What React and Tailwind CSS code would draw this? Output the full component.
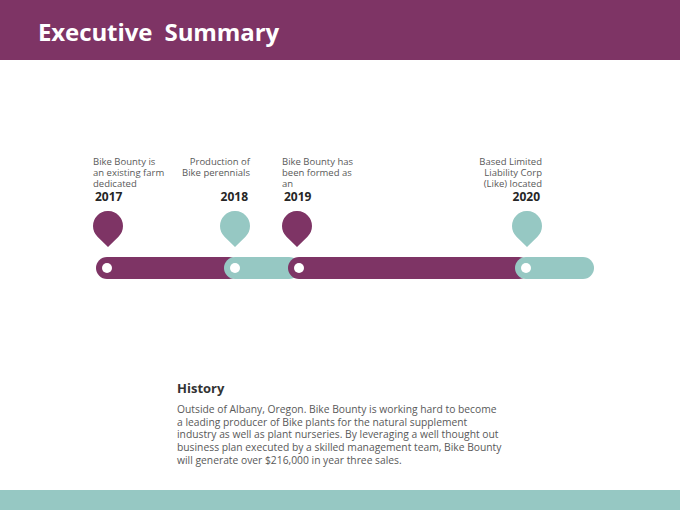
const PURPLE = 'bg-[#7e3465]';

const EVENTS = [
  { year: '2017', lines: ['Bike Bounty is', 'an existing farm', 'dedicated'], align: 'left', color: '#7e3465', gap: 'ml-0' },
  { year: '2018', lines: ['Production of', 'Bike perennials'], align: 'right', color: '#96c8c3', gap: 'ml-[97px]' },
  { year: '2019', lines: ['Bike Bounty has', 'been formed as', 'an'], align: 'left', color: '#7e3465', gap: 'ml-[32px]' },
  { year: '2020', lines: ['Based Limited', 'Liability Corp', '(Like) located'], align: 'right', color: '#96c8c3', gap: 'ml-[200px]' },
];

const SEGMENTS = [
  { cls: 'w-[144px] bg-[#7e3465]' },
  { cls: 'w-[76px] -ml-[16px] bg-[#96c8c3]' },
  { cls: 'w-[242px] -ml-[12px] bg-[#7e3465]' },
  { cls: 'w-[79px] -ml-[15px] bg-[#96c8c3]' },
];

function Pin({ color }) {
  return (
    <svg width="30" height="36" viewBox="0 0 30 36">
      <path d="M15 36 L4.5 25.7 A15 15 0 1 1 25.5 25.7 Z" fill={color} />
    </svg>
  );
}

export default function App() {
  return (
    <div
      className="w-[680px] h-[510px] flex flex-col bg-white overflow-hidden"
      style={{ fontFamily: '"Open Sans", "Noto Sans", sans-serif' }}
    >
      {/* Header */}
      <div className={`h-[60px] shrink-0 ${PURPLE} flex items-center pl-[38px] pt-[4px]`}>
        <h1 className="text-[24px] font-bold text-white tracking-[-0.1px]">
          Executive&nbsp; Summary
        </h1>
      </div>

      <div className="flex-1 flex flex-col">
        {/* Timeline labels + pins */}
        <div className="flex pl-[93px] pt-[96px]">
          {EVENTS.map((ev) => (
            <div
              key={ev.year}
              className={`w-[30px] flex flex-col ${ev.gap} ${ev.align === 'right' ? 'items-end text-right' : 'items-start text-left'}`}
            >
              <div className="h-[34px] whitespace-nowrap text-[9.5px] leading-[11px] text-[#595959]">
                {ev.lines.map((l) => (
                  <div key={l}>{l}</div>
                ))}
              </div>
              <div
                className={`whitespace-nowrap text-[12px] leading-[14px] font-bold text-[#262626] ${ev.align === 'right' ? 'pr-[2px]' : 'pl-[2px]'}`}
              >
                {ev.year}
              </div>
              <div className="mt-[7px] self-start">
                <Pin color={ev.color} />
              </div>
            </div>
          ))}
        </div>

        {/* Timeline bar */}
        <div className="flex pl-[96px] mt-[10px]">
          {SEGMENTS.map((s, i) => (
            <div key={i} className={`h-[22px] rounded-full flex items-center pl-[6px] ${s.cls}`}>
              <div className="w-[10px] h-[10px] rounded-full bg-white" />
            </div>
          ))}
        </div>

        {/* History */}
        <div className="pl-[177px] pt-[100px] w-[520px]">
          <h2 className="text-[13px] leading-[18px] font-bold text-[#333333]">History</h2>
          <p className="mt-[6px] text-[10.3px] leading-[12.7px] text-[#595959]">
            Outside of Albany, Oregon. Bike Bounty is working hard to become
            <br />
            a leading producer of Bike plants for the natural supplement
            <br />
            industry as well as plant nurseries. By leveraging a well thought out
            <br />
            business plan executed by a skilled management team, Bike Bounty
            <br />
            will generate over $216,000 in year three sales.
          </p>
        </div>
      </div>

      {/* Footer band */}
      <div className="h-[20px] shrink-0 bg-[#96c8c3]" />
    </div>
  );
}
